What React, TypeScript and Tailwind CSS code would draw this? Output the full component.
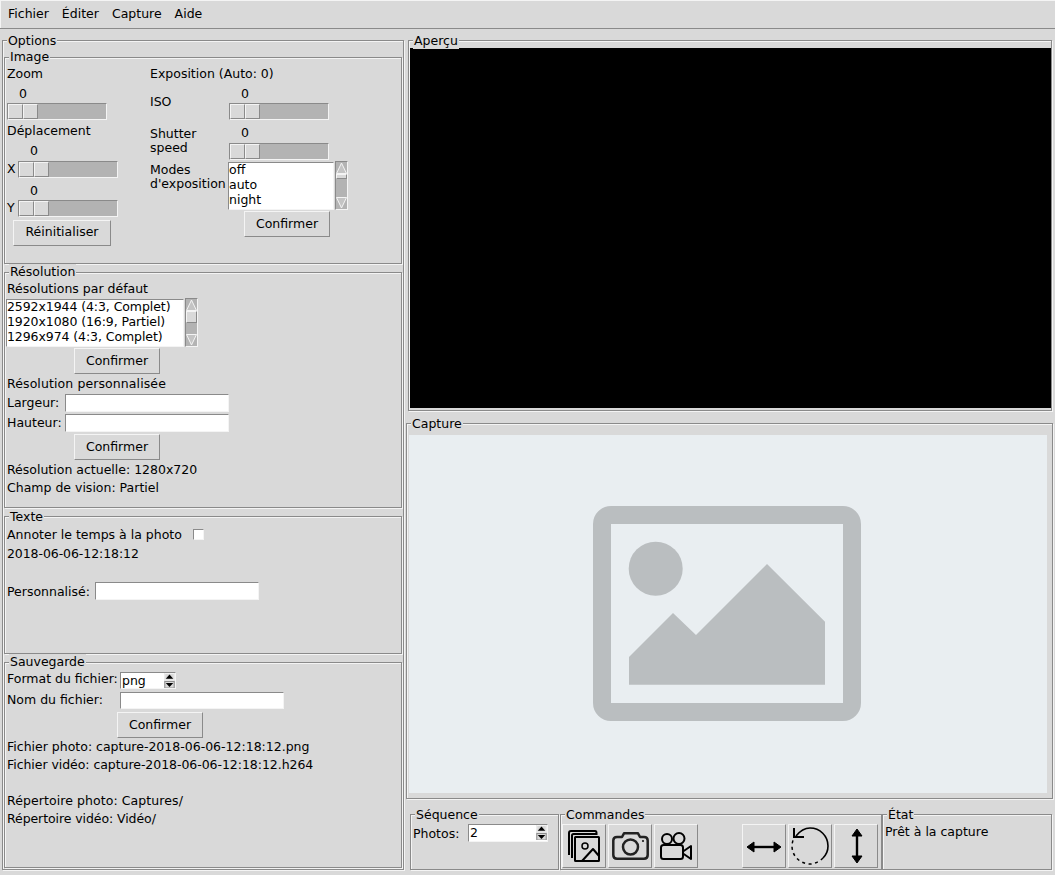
import React from "react";

function Frame({ label, className = "", labelClass = "top-[-8px]", children }: { label: string; className?: string; labelClass?: string; children?: React.ReactNode }) {
  return (
    <div className={"relative border border-[#8a8a8a] shadow-[inset_1px_1px_0_#f4f4f4,1px_1px_0_#f4f4f4] " + className}>
      <span className={"absolute left-[4px] bg-[#d9d9d9] px-px h-[16px] leading-[16px] whitespace-nowrap " + labelClass}>{label}</span>
      {children}
    </div>
  );
}

function Line({ className = "", children }: { className?: string; children?: React.ReactNode }) {
  return <div className={"h-[18px] leading-[20px] whitespace-nowrap " + className}>{children}</div>;
}

function Slider({ className = "" }: { className?: string }) {
  return (
    <div className={"flex w-[100px] h-[17px] bg-[#b3b3b3] border border-[#8a8a8a] border-r-[#f4f4f4] border-b-[#f4f4f4] " + className}>
      <div className="w-[15px] h-[15px] bg-[#d9d9d9] border border-[#f4f4f4] border-r-[#8a8a8a] border-b-[#8a8a8a]" />
      <div className="w-[15px] h-[15px] bg-[#d9d9d9] border border-[#f4f4f4] border-r-[#8a8a8a] border-b-[#8a8a8a]" />
    </div>
  );
}

function Btn({ className = "", children }: { className?: string; children?: React.ReactNode }) {
  return (
    <div className={"flex items-center justify-center bg-[#d9d9d9] border border-[#f4f4f4] border-r-[#8a8a8a] border-b-[#8a8a8a] " + className}>{children}</div>
  );
}

function Input({ className = "h-[18px]" }: { className?: string }) {
  return <div className={"bg-white border border-[#8a8a8a] border-r-[#f4f4f4] border-b-[#f4f4f4] " + className} />;
}

function Scrollbar({ thumb, className = "" }: { thumb: string; className?: string }) {
  return (
    <div className={"flex flex-col w-[13px] h-[49px] bg-[#b3b3b3] border border-[#8a8a8a] border-r-[#f4f4f4] border-b-[#f4f4f4] " + className}>
      <svg width="11" height="12" viewBox="0 0 11 12" className="shrink-0"><path d="M5.5 1 L10.5 11.5 H0.5 Z" fill="#c4c4c4" stroke="#f4f4f4" /></svg>
      <div className={"shrink-0 bg-[#d9d9d9] border border-[#f4f4f4] border-r-[#8a8a8a] border-b-[#8a8a8a] " + thumb} />
      <div className="flex-1" />
      <svg width="11" height="12" viewBox="0 0 11 12" className="shrink-0"><path d="M0.5 0.5 H10.5 L5.5 11 Z" fill="#c4c4c4" stroke="#f4f4f4" /></svg>
    </div>
  );
}

function ListBox({ items, className = "", rowClass = "" }: { items: string[]; className?: string; rowClass?: string }) {
  return (
    <div className={"bg-white border border-[#8a8a8a] border-r-[#f4f4f4] border-b-[#f4f4f4] overflow-hidden " + className}>
      <div className="-mt-px">
        {items.map((t) => (
          <div key={t} className={"h-[15px] leading-[15px] whitespace-nowrap " + rowClass}>{t}</div>
        ))}
      </div>
    </div>
  );
}

function Spin({ value, className = "" }: { value: string; className?: string }) {
  return (
    <div className={"flex justify-between pl-[1px] bg-white border border-[#8a8a8a] border-r-[#f4f4f4] border-b-[#f4f4f4] " + className}>
      <span className="leading-[16px]">{value}</span>
      <div className="flex flex-col w-[11px] h-[15px] bg-[#d9d9d9]">
        <svg width="11" height="8" viewBox="0 0 11 8"><rect x="0.5" y="0.5" width="10" height="7" fill="#d9d9d9" stroke="#f4f4f4" /><path d="M5.5 1.5 L9.5 6 H1.5 Z" fill="#000" /></svg>
        <svg width="11" height="8" viewBox="0 0 11 8"><rect x="0.5" y="0.5" width="10" height="7" fill="#d9d9d9" stroke="#8a8a8a" /><path d="M1.5 2 H9.5 L5.5 6.5 Z" fill="#000" /></svg>
      </div>
    </div>
  );
}

function GalleryIcon() {
  return (
    <svg width="32" height="32" viewBox="0 0 32 32" fill="none" stroke="#000" strokeWidth="2" strokeLinejoin="round">
      <path d="M1 25 V3 Q1 1 3 1 H27 Q28.5 1 28.5 3 V5" />
      <path d="M4 28 V5.5 Q4 4 5.5 4 H29" />
      <rect x="7" y="7" width="24" height="24" rx="0.5" fill="#d9d9d9" />
      <circle cx="17" cy="16" r="3" strokeWidth="1.5" />
      <path d="M14 31 L25 19 L31 26" />
    </svg>
  );
}

function CameraIcon() {
  return (
    <svg width="37" height="28" viewBox="0 0 37 28" fill="none" stroke="#222" strokeWidth="2.5" strokeLinejoin="round">
      <path d="M5 5 H10 L12 1.3 H26 L28 5 H32 Q35.7 5 35.7 8.5 V23 Q35.7 26.7 32 26.7 H5 Q1.3 26.7 1.3 23 V8.5 Q1.3 5 5 5 Z" />
      <circle cx="18.5" cy="15" r="7.5" />
      <circle cx="31" cy="9" r="0.7" fill="#222" strokeWidth="1" />
    </svg>
  );
}

function VideoIcon() {
  return (
    <svg width="32" height="28" viewBox="0 0 32 28" fill="none" stroke="#000" strokeWidth="2" strokeLinejoin="round">
      <circle cx="7" cy="7" r="5" />
      <circle cx="19" cy="6.5" r="5.5" />
      <rect x="1" y="13" width="22" height="14" rx="2.5" />
      <path d="M23 19.5 L31 14 V27 L23 21.5" />
    </svg>
  );
}

function HArrow() {
  return (
    <svg width="36" height="12" viewBox="0 0 36 12" fill="#000" stroke="#000" strokeWidth="1" className="mt-[2px]">
      <path d="M8 1 L1 6 L8 11 Z" />
      <path d="M28 1 L35 6 L28 11 Z" />
      <path d="M6 6 H30" strokeWidth="2.4" />
    </svg>
  );
}

function VArrow() {
  return (
    <svg width="12" height="36" viewBox="0 0 12 36" fill="#000" stroke="#000" strokeWidth="1" className="ml-[2px]">
      <path d="M1 8 L6 1 L11 8 Z" />
      <path d="M1 28 L6 35 L11 28 Z" />
      <path d="M6 6 V30" strokeWidth="2.4" />
    </svg>
  );
}

function RotateIcon() {
  return (
    <svg width="40" height="38" viewBox="0 0 40 38" fill="none" stroke="#000">
      <path d="M6 9 C10 4 15 1 20 1 C30 1 38 9 38 19 C38 24 36 28 33 31" strokeWidth="1.6" />
      <path d="M33 31 C30 34 25 37 20 37 C10 37 2 29 2 19 C2 17 2.5 15 3 13" strokeWidth="1.5" strokeDasharray="3 3.5" />
      <path d="M4 1 V10 H14" strokeWidth="2" />
    </svg>
  );
}

function PlaceholderIcon() {
  return (
    <svg width="268" height="215" viewBox="0 0 268 215">
      <rect x="9" y="9" width="250" height="197" rx="9" fill="none" stroke="#babec0" strokeWidth="18" />
      <circle cx="62.7" cy="62.7" r="27" fill="#babec0" />
      <path d="M36 151 L80 107 L103 129 L174 58 L232 115.7 V178.7 H36 Z" fill="#babec0" />
    </svg>
  );
}

export default function App() {
  return (
    <div className="w-[1055px] h-[875px] overflow-hidden bg-[#d9d9d9] text-black text-[12.5px] flex flex-col font-['DejaVu_Sans',sans-serif]">
      {/* Menu */}
      <div className="h-[29px] shrink-0 flex items-center gap-[13px] pl-[8px] border-b border-[#8a8a8a] shadow-[inset_1px_1px_0_#f4f4f4]">
        <span>Fichier</span>
        <span>Éditer</span>
        <span>Capture</span>
        <span>Aide</span>
      </div>
      <div className="flex flex-1 min-h-0">
        {/* Left */}
        <div className="w-[405px] shrink-0 pl-[2px] pt-[11px]">
          <Frame label="Options" className="h-[830px] w-[402px] pl-px pt-[16px]">
            <Frame label="Image" labelClass="top-[-9px]" className="h-[207px] w-[398px] flex pl-[2px] pt-[6px]">
              <div className="w-[143px] shrink-0 flex flex-col">
                <Line>Zoom</Line>
                <Line className="mt-[2px] pl-[12px]">0</Line>
                <Slider className="mt-px" />
                <Line className="mt-px">Déplacement</Line>
                <Line className="mt-[2px] pl-[23px]">0</Line>
                <div className="flex items-center mt-px gap-[2px]"><span className="w-[9px]">X</span><Slider /></div>
                <Line className="mt-[2px] pl-[23px]">0</Line>
                <div className="flex items-center gap-[2px]"><span className="w-[9px]">Y</span><Slider /></div>
                <Btn className="mt-[2px] ml-[6px] w-[98px] h-[26px]">Réinitialiser</Btn>
              </div>
              <div className="flex flex-col">
                <Line>Exposition (Auto: 0)</Line>
                <div className="flex h-[39px] mt-px">
                  <Line className="w-[79px] mt-[9px]">ISO</Line>
                  <div className="flex flex-col">
                    <Line className="pl-[12px] mt-px">0</Line>
                    <Slider className="mt-px" />
                  </div>
                </div>
                <div className="flex h-[39px]">
                  <div className="w-[79px] leading-[14px] mt-[5px]">Shutter<br />speed</div>
                  <div className="flex flex-col">
                    <Line className="pl-[12px] mt-px">0</Line>
                    <Slider className="mt-[2px]" />
                  </div>
                </div>
                <div className="flex mt-px">
                  <div className="w-[78px] leading-[14px] mt-px whitespace-nowrap">Modes<br />d'exposition</div>
                  <ListBox items={["off", "auto", "night"]} className="w-[106px] h-[48px]" />
                  <Scrollbar thumb="h-[5px]" className="-mt-px ml-px" />
                </div>
                <Btn className="ml-[94px] mt-px w-[86px] h-[26px]">Confirmer</Btn>
              </div>
            </Frame>
            <Frame label="Résolution" labelClass="top-[-9px]" className="mt-[8px] h-[236px] w-[398px] pl-[2px] pt-[6px] flex flex-col">
              <Line>Résolutions par défaut</Line>
              <div className="flex mt-[2px] -ml-px">
                <ListBox items={["2592x1944 (4:3, Complet)", "1920x1080 (16:9, Partiel)", "1296x974 (4:3, Complet)"]} rowClass="tracking-[-0.08px]" className="w-[178px] h-[48px]" />
                <Scrollbar thumb="h-[12px]" className="ml-px -mt-px" />
              </div>
              <Btn className="ml-[67px] mt-px w-[86px] h-[26px]">Confirmer</Btn>
              <Line className="tracking-[0.1px]">Résolution personnalisée</Line>
              <div className="flex mt-[2px] h-[18px] leading-[18px]"><span className="w-[58px]">Largeur:</span><Input className="w-[164px] h-[18px]" /></div>
              <div className="flex mt-[2px] h-[18px] leading-[18px]"><span className="w-[58px]">Hauteur:</span><Input className="w-[164px] h-[18px]" /></div>
              <Btn className="ml-[67px] mt-[2px] w-[86px] h-[26px]">Confirmer</Btn>
              <Line>Résolution actuelle: 1280x720</Line>
              <Line>Champ de vision: Partiel</Line>
            </Frame>
            <Frame label="Texte" className="mt-[8px] h-[138px] w-[398px] pl-[2px] pt-[8px] flex flex-col">
              <div className="flex items-center h-[18px]">
                <span className="w-[186px] pt-[2px]">Annoter le temps à la photo</span>
                <div className="w-[11px] h-[11px] bg-white border border-[#8a8a8a] border-r-[#f4f4f4] border-b-[#f4f4f4]" />
              </div>
              <Line className="mt-px tracking-[-0.08px]">2018-06-06-12:18:12</Line>
              <div className="flex h-[18px] leading-[20px] mt-[20px]"><span className="w-[88px]">Personnalisé:</span><Input className="w-[164px] h-[18px]" /></div>
            </Frame>
            <Frame label="Sauvegarde" labelClass="top-[-9px]" className="mt-[8px] h-[206px] w-[398px] pl-[2px] pt-[8px] flex flex-col">
              <div className="flex h-[18px] leading-[16px]"><span className="w-[113px]">Format du fichier:</span><Spin value="png" className="w-[56px] h-[17px] mt-px" /></div>
              <div className="flex h-[18px] leading-[18px] mt-[2px]"><span className="w-[113px]">Nom du fichier:</span><Input className="w-[164px] h-[17px] mt-px" /></div>
              <Btn className="ml-[110px] mt-[3px] w-[86px] h-[26px]">Confirmer</Btn>
              <Line className="-mt-px">Fichier photo: capture-2018-06-06-12:18:12.png</Line>
              <Line className="tracking-[-0.05px]">Fichier vidéo: capture-2018-06-06-12:18:12.h264</Line>
              <Line className="mt-[18px] tracking-[0.08px]">Répertoire photo: Captures/</Line>
              <Line className="tracking-[-0.08px]">Répertoire vidéo: Vidéo/</Line>
            </Frame>
          </Frame>
        </div>
        {/* Right */}
        <div className="flex-1 min-w-0 flex flex-col pl-[1px] pt-[11px]">
          <Frame label="Aperçu" className="h-[371px] w-[644px] ml-[2px] pl-px pt-[7px]">
            <div className="w-[641px] h-[360px] bg-black" />
          </Frame>
          <Frame label="Capture" className="mt-[12px] h-[376px] w-[647px] pl-[2px] pt-[11px]">
            <div className="w-[638px] h-[358px] bg-[#e9eef1] flex items-center justify-center pr-[2px] pb-[2px]">
              <PlaceholderIcon />
            </div>
          </Frame>
          <div className="flex mt-[15px] pl-[4px]">
            <Frame label="Séquence" className="w-[149px] h-[56px] pl-[2px] pt-[9px] shrink-0">
              <div className="flex h-[18px] leading-[20px]"><span className="w-[55px]">Photos:</span><Spin value="2" className="w-[80px] h-[18px]" /></div>
            </Frame>
            <Frame label="Commandes" className="w-[322px] h-[56px] ml-[1px] pl-px pt-[9px] shrink-0">
              <div className="flex gap-[2px]">
                <Btn className="w-[44px] h-[44px]"><GalleryIcon /></Btn>
                <Btn className="w-[44px] h-[44px]"><CameraIcon /></Btn>
                <Btn className="w-[44px] h-[44px]"><VideoIcon /></Btn>
                <div className="w-[40px]" />
                <Btn className="w-[44px] h-[44px]"><HArrow /></Btn>
                <Btn className="w-[44px] h-[44px]"><RotateIcon /></Btn>
                <Btn className="w-[44px] h-[44px]"><VArrow /></Btn>
              </div>
            </Frame>
            <Frame label="État" className="w-[170px] h-[56px] pl-[2px] pt-[7px] shrink-0">
              <Line>Prêt à la capture</Line>
            </Frame>
          </div>
        </div>
      </div>
    </div>
  );
}
